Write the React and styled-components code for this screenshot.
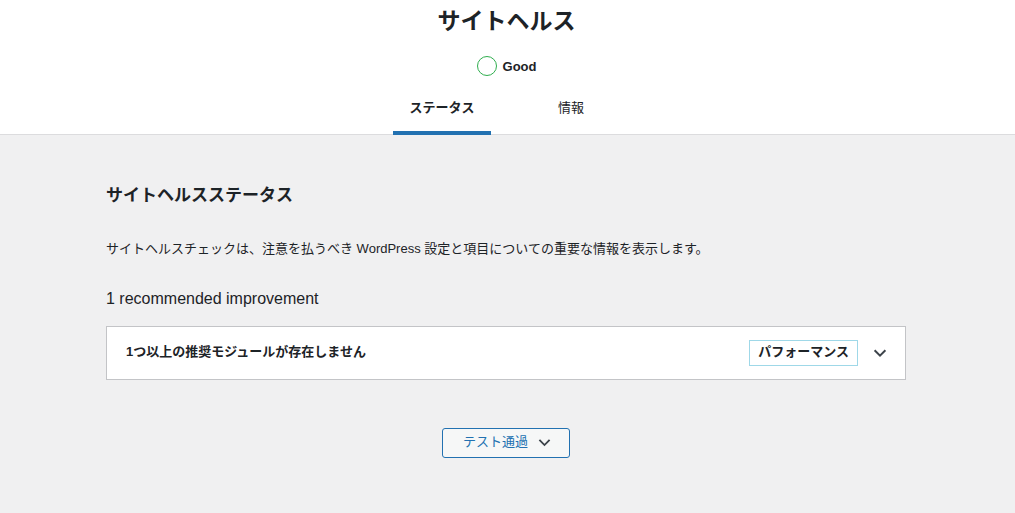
import React from "react";
import styled, { createGlobalStyle } from "styled-components";

const GlobalStyle = createGlobalStyle`
  html, body {
    margin: 0;
    padding: 0;
    min-height: 100%;
    background: #f0f0f1;
  }
  body {
    font-family: "Liberation Sans", "Noto Sans CJK JP", sans-serif;
    font-size: 13px;
    color: #1d2327;
  }
  * { box-sizing: border-box; }
`;

const Header = styled.div`
  background: #fff;
  border-bottom: 1px solid #dcdcde;
  display: flex;
  flex-direction: column;
  align-items: center;
  padding: 6px 2px 0 0;
`;

const Title = styled.h1`
  margin: 0;
  font-size: 23px;
  line-height: 30px;
  font-weight: 700;
`;

const Score = styled.div`
  display: flex;
  align-items: center;
  gap: 6px;
  margin-top: 20px;
  height: 20px;
  font-size: 13px;
  font-weight: 700;
  color: #1d2327;
`;

const Ring = styled.span`
  width: 20px;
  height: 20px;
  border-radius: 50%;
  border: 1.5px solid #2fae4e;
`;

const Tabs = styled.nav`
  display: grid;
  grid-template-columns: 1fr 1fr;
  margin-top: 12px;
`;

const Tab = styled.a`
  display: block;
  text-align: center;
  margin: 0 16px -1px;
  padding: 10px 16px 13px;
  line-height: 20px;
  font-size: 13px;
  font-weight: ${(p) => (p.$active ? 700 : 400)};
  color: #1d2327;
  text-decoration: none;
  border-bottom: 4px solid ${(p) => (p.$active ? "#2271b1" : "transparent")};
`;

const Page = styled.div`
  padding-right: 3px;
`;

const Body = styled.main`
  max-width: 800px;
  margin: 0 auto;
  padding: 49px 0 40px;
`;

const Heading = styled.h2`
  margin: 0;
  font-size: 17px;
  line-height: 24px;
  font-weight: 700;
`;

const Lead = styled.p`
  margin: 31px 0 0;
  line-height: 20px;
  font-size: 13px;
`;

const Count = styled.h3`
  margin: 28px 0 0;
  font-size: 16px;
  line-height: 24px;
  font-weight: 400;
`;

const Accordion = styled.div`
  margin-top: 15px;
  background: #fff;
  border: 1px solid #c3c4c7;
`;

const Trigger = styled.button`
  width: 100%;
  display: flex;
  align-items: center;
  height: 52px;
  padding: 0 16px 0 19px;
  background: none;
  border: 0;
  font: inherit;
  color: #1d2327;
  cursor: pointer;
  text-align: left;
`;

const IssueTitle = styled.span`
  flex: 1;
  font-weight: 700;
  font-size: 13px;
  line-height: 18px;
  padding-bottom: 3px;
`;

const Badge = styled.span`
  border: 1px solid #9fd8e8;
  padding: 0 8px 2px;
  height: 26px;
  line-height: 22px;
  font-size: 13px;
  font-weight: 700;
  margin-right: 13px;
`;

const Footer = styled.div`
  display: flex;
  justify-content: center;
  margin-top: 48px;
`;

const PassedButton = styled.button`
  display: flex;
  align-items: center;
  gap: 8px;
  height: 30px;
  padding: 0 16px 2px 20px;
  background: #f6f7f7;
  border: 1px solid #2271b1;
  border-radius: 3px;
  color: #2271b1;
  font: inherit;
  font-size: 13px;
  line-height: 18px;
  cursor: pointer;
`;

const Chevron = ({ size = 18 }) => (
  <svg width={size} height={size} viewBox="0 0 20 20" aria-hidden="true">
    <path d="M4 7l6 6 6-6" fill="none" stroke="#3c434a" strokeWidth="2.2" />
  </svg>
);

export default function App() {
  return (
    <>
      <GlobalStyle />
      <Header>
        <Title>サイトヘルス</Title>
        <Score>
          <Ring />
          Good
        </Score>
        <Tabs>
          <Tab $active href="#">ステータス</Tab>
          <Tab href="#">情報</Tab>
        </Tabs>
      </Header>
      <Page>
        <Body>
          <Heading>サイトヘルスステータス</Heading>
          <Lead>
            サイトヘルスチェックは、注意を払うべき WordPress 設定と項目についての重要な情報を表示します。
          </Lead>
          <Count>1 recommended improvement</Count>
          <Accordion>
            <Trigger>
              <IssueTitle>1つ以上の推奨モジュールが存在しません</IssueTitle>
              <Badge>パフォーマンス</Badge>
              <Chevron />
            </Trigger>
          </Accordion>
          <Footer>
            <PassedButton>
              テスト通過
              <Chevron size={17} />
            </PassedButton>
          </Footer>
        </Body>
      </Page>
    </>
  );
}
